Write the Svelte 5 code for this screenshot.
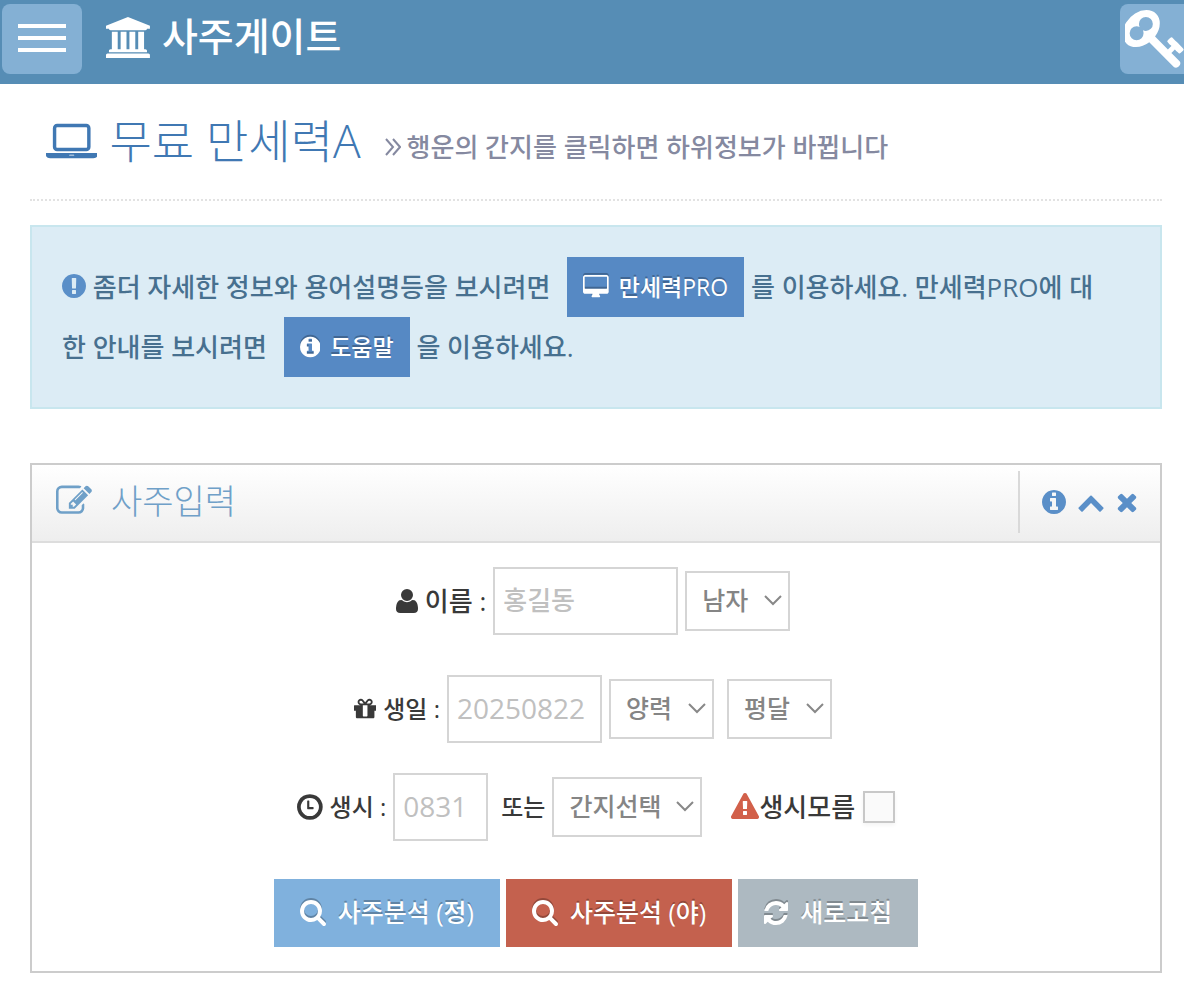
<script lang="ts">
	type Icon = { box: string; d: string };

	const icons: Record<string, Icon> = {
		bank: {
			box: '0 0 1920 1792',
			d: 'M960 0l960 384v128h-128q0 26-20.5 45t-48.5 19h-1526q-28 0-48.5-19t-20.5-45h-128v-128zm-704 640h256v768h128v-768h256v768h128v-768h256v768h128v-768h256v768h59q28 0 48.5 19t20.5 45v64h-1664v-64q0-26 20.5-45t48.5-19h59v-768zm1595 960q28 0 48.5 19t20.5 45v128h-1920v-128q0-26 20.5-45t48.5-19h1782z'
		},
		key: {
			box: '64 128 1664 1600',
			d: 'M832 512q0-80-56-136t-136-56-136 56-56 136q0 42 19 83-41-19-83-19-80 0-136 56t-56 136 56 136 136 56 136-56 56-136q0-42-19-83 41 19 83 19 80 0 136-56t56-136zm851 704q0 17-49 66t-66 49q-9 0-28.5-16t-36.5-33-38.5-40-24.5-26l-96 96 220 220q28 28 28 68 0 42-39 81t-81 39q-40 0-68-28l-671-671q-176 131-365 131-163 0-265.5-102.5t-102.5-265.5q0-160 95-313t248-248 313-95q163 0 265.5 102.5t102.5 265.5q0 189-131 365l355 355 96-96q-3-3-26-24.5t-40-38.5-33-36.5-16-28.5q0-17 49-66t66-49q13 0 23 10 6 6 46 44.5t82 79.5 86.5 86 73 78 28.5 41z'
		},
		laptop: {
			box: '0 0 1920 1792',
			d: 'M416 1280q-66 0-113-47t-47-113v-704q0-66 47-113t113-47h1088q66 0 113 47t47 113v704q0 66-47 113t-113 47h-1088zm-32-864v704q0 13 9.5 22.5t22.5 9.5h1088q13 0 22.5-9.5t9.5-22.5v-704q0-13-9.5-22.5t-22.5-9.5h-1088q-13 0-22.5 9.5t-9.5 22.5zm1376 928h160v96q0 40-47 68t-113 28h-1600q-66 0-113-28t-47-68v-96h1760zm-720 96q16 0 16-16t-16-16h-160q-16 0-16 16t16 16h160z'
		},
		desktop: {
			box: '-64 0 1920 1792',
			d: 'M1728 992v-832q0-13-9.5-22.5t-22.5-9.5h-1600q-13 0-22.5 9.5t-9.5 22.5v832q0 13 9.5 22.5t22.5 9.5h1600q13 0 22.5-9.5t9.5-22.5zm128-832v1088q0 66-47 113t-113 47h-544q0 37 16 77.5t32 71 16 43.5q0 26-19 45t-45 19h-512q-26 0-45-19t-19-45q0-14 16-44t32-70 16-78h-544q-66 0-113-47t-47-113v-1088q0-66 47-113t113-47h1600q66 0 113 47t47 113z'
		},
		exclaim: {
			box: '128 0 1536 1792',
			d: 'M896 128q209 0 385.5 103t279.5 279.5 103 385.5-103 385.5-279.5 279.5-385.5 103-385.5-103-279.5-279.5-103-385.5 103-385.5 279.5-279.5 385.5-103zm128 1247v-190q0-14-9-23.5t-22-9.5h-192q-13 0-23 10t-10 23v190q0 13 10 23t23 10h192q13 0 22-9.5t9-23.5zm-2-344l18-621q0-12-10-18-10-8-24-8h-220q-14 0-24 8-10 6-10 18l17 621q0 10 10 17.5t24 7.5h185q14 0 23.5-7.5t10.5-17.5z'
		},
		info: {
			box: '128 0 1536 1792',
			d: 'M1152 1376v-160q0-14-9-23t-23-9h-96v-512q0-14-9-23t-23-9h-320q-14 0-23 9t-9 23v160q0 14 9 23t23 9h96v320h-96q-14 0-23 9t-9 23v160q0 14 9 23t23 9h448q14 0 23-9t9-23zm-128-896v-160q0-14-9-23t-23-9h-192q-14 0-23 9t-9 23v160q0 14 9 23t23 9h192q14 0 23-9t9-23zm640 416q0 209-103 385.5t-279.5 279.5-385.5 103-385.5-103-279.5-279.5-103-385.5 103-385.5 279.5-279.5 385.5-103 385.5 103 279.5 279.5 103 385.5z'
		},
		edit: {
			box: '0 0 1792 1792',
			d: 'M888 1184l116-116-152-152-116 116v56h96v96h56zm440-720q-16-16-33 1l-350 350q-17 17-1 33t33-1l350-350q17-17 1-33zm80 594v190q0 119-84.5 203.5t-203.5 84.5h-832q-119 0-203.5-84.5t-84.5-203.5v-832q0-119 84.5-203.5t203.5-84.5h832q63 0 117 25 15 7 18 23 3 17-9 29l-49 49q-14 14-32 8-23-6-45-6h-832q-66 0-113 47t-47 113v832q0 66 47 113t113 47h832q66 0 113-47t47-113v-126q0-13 9-22l64-64q15-15 35-7t20 29zm-96-738l288 288-672 672h-288v-288zm444 132l-92 92-288-288 92-92q28-28 68-28t68 28l152 152q28 28 28 68t-28 68z'
		},
		up: {
			box: '64 0 1664 1792',
			d: 'M1683 1331l-166 165q-19 19-45 19t-45-19l-531-531-531 531q-19 19-45 19t-45-19l-166-165q-19-19-19-45.5t19-45.5l742-741q19-19 45-19t45 19l742 741q19 19 19 45.5t-19 45.5z'
		},
		times: {
			box: '192 0 1408 1792',
			d: 'M1490 1322q0 40-28 68l-136 136q-28 28-68 28t-68-28l-294-294-294 294q-28 28-68 28t-68-28l-136-136q-28-28-28-68t28-68l294-294-294-294q-28-28-28-68t28-68l136-136q28-28 68-28t68 28l294 294 294-294q28-28 68-28t68 28l136 136q28 28 28 68t-28 68l-294 294 294 294q28 28 28 68z'
		},
		user: {
			box: '192 0 1408 1792',
			d: 'M1600 1405q0 120-73 189.5t-194 69.5h-874q-121 0-194-69.5t-73-189.5q0-53 3.5-103.5t14-109 26.5-108.5 43-97.5 62-81 85.5-53.5 111.5-20q9 0 42 21.5t74.5 48 108 48 133.5 21.5 133.5-21.5 108-48 74.5-48 42-21.5q61 0 111.5 20t85.5 53.5 62 81 43 97.5 26.5 108.5 14 109 3.5 103.5zm-320-893q0 159-112.5 271.5t-271.5 112.5-271.5-112.5-112.5-271.5 112.5-271.5 271.5-112.5 271.5 112.5 112.5 271.5z'
		},
		gift: {
			box: '128 0 1536 1792',
			d: 'M1056 1356v-716h-320v716q0 25 18 38.5t46 13.5h192q28 0 46-13.5t18-38.5zm-456-844h195l-126-161q-26-31-69-31-40 0-68 28t-28 68 28 68 68 28zm688-96q0-40-28-68t-68-28q-43 0-69 31l-125 161h194q40 0 68-28t28-68zm376 256v320q0 14-9 23t-23 9h-96v416q0 40-28 68t-68 28h-1088q-40 0-68-28t-28-68v-416h-96q-14 0-23-9t-9-23v-320q0-14 9-23t23-9h440q-93 0-158.5-65.5t-65.5-158.5 65.5-158.5 158.5-65.5q107 0 168 77l128 165 128-165q61-77 168-77 93 0 158.5 65.5t65.5 158.5-65.5 158.5-158.5 65.5h440q14 0 23 9t9 23z'
		},
		clock: {
			box: '128 0 1536 1792',
			d: 'M736 544v448q0 14 9 23t23 9h320q14 0 23-9t9-23v-64q0-14-9-23t-23-9h-224v-352q0-14-9-23t-23-9h-64q-14 0-23 9t-9 23zm704 352q0-148-73-273t-198-198-273-73-273 73-198 198-73 273 73 273 198 198 273 73 273-73 198-198 73-273zm224 0q0 209-103 385.5t-279.5 279.5-385.5 103-385.5-103-279.5-279.5-103-385.5 103-385.5 279.5-279.5 385.5-103 385.5 103 279.5 279.5 103 385.5z'
		},
		warning: {
			box: '0 0 1792 1792',
			d: 'M1024 1375v-190q0-14-9.5-23.5t-22.5-9.5h-192q-13 0-22.5 9.5t-9.5 23.5v190q0 14 9.5 23.5t22.5 9.5h192q13 0 22.5-9.5t9.5-23.5zm-2-374l18-459q0-12-10-19-13-11-24-11h-220q-11 0-24 11-10 7-10 21l17 457q0 10 10 16.5t24 6.5h185q14 0 23.5-6.5t10.5-16.5zm-14-934l768 1408q35 63-2 126-17 29-46.5 46t-63.5 17h-1536q-34 0-63.5-17t-46.5-46q-37-63-2-126l768-1408q17-31 47-49t65-18 65 18 47 49z'
		},
		search: {
			box: '64 128 1664 1664',
			d: 'M1216 832q0-185-131.5-316.5t-316.5-131.5-316.5 131.5-131.5 316.5 131.5 316.5 316.5 131.5 316.5-131.5 131.5-316.5zm512 832q0 52-38 90t-90 38q-54 0-90-38l-343-342q-179 124-399 124-143 0-273.5-55.5t-225-150-150-225-55.5-273.5 55.5-273.5 150-225 225-150 273.5-55.5 273.5 55.5 225 150 150 225 55.5 273.5q0 220-124 399l343 343q37 37 37 90z'
		},
		refresh: {
			box: '128 64 1536 1664',
			d: 'M1639 1056q0 5-1 7-64 268-268 434.5t-478 166.5q-146 0-282.5-55t-243.5-157l-129 129q-19 19-45 19t-45-19-19-45v-448q0-26 19-45t45-19h448q26 0 45 19t19 45-19 45l-137 137q71 66 161 102t187 36q134 0 250-65t186-179q11-17 53-117 8-23 30-23h192q13 0 22.5 9.5t9.5 22.5zm25-800v448q0 26-19 45t-45 19h-448q-26 0-45-19t-19-45 19-45l138-138q-148-137-349-137-134 0-250 65t-186 179q-11 17-53 117-8 23-30 23h-199q-13 0-22.5-9.5t-9.5-22.5v-7q65-268 270-434.5t480-166.5q146 0 284 55.5t245 156.5l130-129q19-19 45-19t45 19 19 45z'
		}
	};

	let name = $state('');
	let birthday = $state('');
	let birthtime = $state('');
	let gender = $state('남자');
	let calendar = $state('양력');
	let month = $state('평달');
	let ganji = $state('간지선택');
	let unknownTime = $state(false);
	let open = $state(true);

	function reset() {
		name = '';
		birthday = '';
		birthtime = '';
		gender = '남자';
		calendar = '양력';
		month = '평달';
		ganji = '간지선택';
		unknownTime = false;
	}
</script>

{#snippet icon(key: string)}
	<svg class="icon" viewBox={icons[key].box} aria-hidden="true">
		<path d={icons[key].d} />
	</svg>
{/snippet}

{#snippet caret()}
	<svg class="caret" viewBox="0 0 20 12" aria-hidden="true">
		<path d="M2 1l8 8 8-8" />
	</svg>
{/snippet}

<header class="navbar">
	<button class="menu-toggle" aria-label="메뉴">
		<span></span>
		<span></span>
		<span></span>
	</button>
	<a class="brand" href="/">{@render icon('bank')}<span>사주게이트</span></a>
	<button class="login" aria-label="로그인">{@render icon('key')}</button>
</header>

<main>
	<div class="page-header">
		<h1>{@render icon('laptop')}<span>무료 만세력A</span></h1>
		<p>
			<svg class="double" viewBox="0 0 16 18" aria-hidden="true">
				<path d="M1 1l7 8-7 8M8 1l7 8-7 8" />
			</svg>
			행운의 간지를 클릭하면 하위정보가 바뀝니다
		</p>
	</div>

	<div class="alert">
		{@render icon('exclaim')} 좀더 자세한 정보와 용어설명등을 보시려면
		<a class="btn-link" href="#pro">{@render icon('desktop')}<span>만세력PRO</span></a>
		를 이용하세요. 만세력PRO에 대한 안내를 보시려면
		<a class="btn-link" href="#help">{@render icon('info')}<span>도움말</span></a>
		을 이용하세요.
	</div>

	<section class="widget">
		<div class="widget-header">
			<h2>{@render icon('edit')}<span>사주입력</span></h2>
			<div class="toolbar">
				<button aria-label="정보">{@render icon('info')}</button>
				<button aria-label="접기" onclick={() => (open = !open)}>{@render icon('up')}</button>
				<button aria-label="닫기">{@render icon('times')}</button>
			</div>
		</div>

		{#if open}
			<form class="widget-body" onsubmit={(e) => e.preventDefault()}>
				<div class="row row-name">
					<label for="name">{@render icon('user')}이름 :</label>
					<input id="name" class="name" type="text" placeholder="홍길동" bind:value={name} />
					<div class="select">
						<select aria-label="성별" bind:value={gender}>
							<option>남자</option>
							<option>여자</option>
						</select>
						{@render caret()}
					</div>
				</div>

				<div class="row row-day">
					<label for="birthday">{@render icon('gift')}생일 :</label>
					<input id="birthday" class="day" type="text" placeholder="20250822" bind:value={birthday} />
					<div class="select">
						<select aria-label="양력 음력" bind:value={calendar}>
							<option>양력</option>
							<option>음력</option>
						</select>
						{@render caret()}
					</div>
					<div class="select">
						<select aria-label="평달 윤달" bind:value={month}>
							<option>평달</option>
							<option>윤달</option>
						</select>
						{@render caret()}
					</div>
				</div>

				<div class="row row-time">
					<label for="birthtime">{@render icon('clock')}생시 :</label>
					<input id="birthtime" class="time" type="text" placeholder="0831" bind:value={birthtime} />
					<label class="or" for="ganji">또는</label>
					<div class="select wide">
						<select id="ganji" bind:value={ganji}>
							<option>간지선택</option>
						</select>
						{@render caret()}
					</div>
					<label class="unknown">
						{@render icon('warning')}<span>생시모름</span>
						<input type="checkbox" bind:checked={unknownTime} />
					</label>
				</div>

				<div class="actions">
					<button class="btn light" type="submit">
						{@render icon('search')}<span>사주분석 (정)</span>
					</button>
					<button class="btn danger" type="submit">
						{@render icon('search')}<span>사주분석 (야)</span>
					</button>
					<button class="btn grey" type="button" onclick={reset}>
						{@render icon('refresh')}<span>새로고침</span>
					</button>
				</div>
			</form>
		{/if}
	</section>
</main>

<style>
	:global(body) {
		background: #fff;
		color: #393939;
		font-family: 'Open Sans', 'Noto Sans CJK KR', sans-serif;
		font-size: 26px;
		font-weight: 500;
	}

	button,
	input,
	select {
		box-sizing: border-box;
		font-family: inherit;
		font-weight: inherit;
	}

	button {
		border: 0;
		padding: 0;
		cursor: pointer;
	}

	.icon {
		height: 28px;
		flex: none;
		fill: currentColor;
	}

	/* Navbar */
	.navbar {
		display: flex;
		align-items: flex-start;
		height: 80px;
		padding: 4px 0 0 2px;
		background: #568db5;
	}

	.menu-toggle {
		display: flex;
		flex-direction: column;
		align-items: center;
		justify-content: center;
		gap: 8px;
		width: 80px;
		height: 68px;
		padding-bottom: 2px;
		border-radius: 8px;
		background: #84b0d4;
	}

	.menu-toggle,
	.login {
		height: 70px;
	}

	.menu-toggle span {
		width: 48px;
		height: 4px;
		background: #fff;
	}

	.brand {
		display: flex;
		align-items: center;
		gap: 12px;
		margin-left: 24px;
		color: #fff;
		font-size: 39px;
		line-height: 66px;
		text-decoration: none;
	}

	.brand span {
		padding-bottom: 2px;
		line-height: 64px;
	}

	.brand .icon {
		height: 41px;
	}

	.login {
		width: 64px;
		margin-left: auto;
		padding-left: 5px;
		overflow: hidden;
		border-radius: 8px 0 0 8px;
		background: #84b0d4;
		color: #fff;
		text-align: left;
	}

	.login .icon {
		display: block;
		height: 58px;
	}

	main {
		padding: 0 22px 24px 30px;
	}

	/* Page header */
	.page-header {
		display: flex;
		align-items: center;
		gap: 24px;
		padding: 0 16px;
		height: 115px;
		border-bottom: 2px dotted #e2e2e2;
	}

	h1 {
		display: flex;
		align-items: center;
		gap: 12px;
		margin: 0 0 2px;
		color: #4078b3;
		font-size: 46px;
		font-weight: 300;
		line-height: 108px;
	}

	h1 span {
		padding-bottom: 2px;
	}

	h1 .icon {
		height: 48px;
	}

	.page-header p {
		display: flex;
		align-items: center;
		gap: 6px;
		margin: 10px 0 0;
		color: #8589a0;
		line-height: 40px;
	}

	.double {
		width: 16px;
		height: 18px;
		fill: none;
		stroke: currentColor;
		stroke-width: 2;
	}

	/* Alert */
	.alert {
		margin: 24px 0 54px;
		padding: 30px 60px 30px 30px;
		border: 2px solid #c8e6ee;
		background: #dcecf5;
		color: #47708f;
		line-height: 60px;
	}

	.alert > .icon {
		color: #5a8fc8;
		vertical-align: -3px;
	}

	.btn-link {
		display: inline-flex;
		align-items: center;
		gap: 10px;
		height: 60px;
		margin-left: 10px;
		padding: 0 16px;
		background: #5689c4;
		color: #fff;
		font-size: 23px;
		text-decoration: none;
		text-shadow: 0 -2px 0 rgba(0, 0, 0, 0.25);
		vertical-align: top;
	}

	.btn-link .icon {
		height: 24px;
		filter: drop-shadow(0 -2px 0 rgba(0, 0, 0, 0.25));
	}

	/* Widget */
	.widget {
		border: 2px solid #ccc;
	}

	.widget-header {
		display: flex;
		align-items: center;
		justify-content: space-between;
		height: 76px;
		padding-left: 24px;
		border-bottom: 2px solid #ddd;
		background: linear-gradient(to bottom, #fff, #eee);
	}

	h2 {
		display: flex;
		align-items: center;
		gap: 19px;
		margin: 0 0 4px;
		color: #6fa0c8;
		font-size: 34px;
		font-weight: 300;
		line-height: 68px;
	}

	h2 .icon {
		height: 36px;
	}

	.toolbar {
		display: flex;
		align-items: center;
		gap: 12px;
		height: 62px;
		margin-bottom: 2px;
		padding: 0 22px;
		border-left: 2px solid #d9d9d9;
	}

	.toolbar button {
		background: none;
		color: #5a8fc8;
	}

	.toolbar .icon {
		display: block;
	}

	/* Form */
	.widget-body {
		padding: 24px 0;
	}

	.row {
		display: flex;
		align-items: center;
		justify-content: center;
		gap: 7px;
	}

	.row-name {
		margin-bottom: 40px;
	}

	.row-day {
		margin-bottom: 30px;
		font-size: 24px;
	}

	.row-time {
		margin-bottom: 38px;
		font-size: 24px;
	}

	label {
		display: flex;
		align-items: center;
		gap: 7px;
		line-height: 40px;
	}

	.row-day label .icon {
		height: 26px;
	}

	.row-time label .icon {
		height: 30px;
	}

	input[type='text'] {
		height: 68px;
		padding: 0 8px 2px;
		border: 2px solid #d5d5d5;
		background: #fff;
		color: #858585;
		font-size: 28px;
		font-weight: 400;
	}

	input::placeholder {
		color: #c0c0c0;
		opacity: 1;
	}

	input[type='text'].name {
		width: 185px;
		font-size: 26px;
		font-weight: 500;
	}

	input.day {
		width: 155px;
	}

	input.time {
		width: 95px;
	}

	.select {
		display: grid;
		align-items: center;
		width: 105px;
		margin-right: 6px;
	}

	.select.wide {
		width: 150px;
	}

	.select > :global(*) {
		grid-area: 1 / 1;
	}

	select {
		appearance: none;
		width: 100%;
		height: 60px;
		padding: 0 15px 2px;
		border: 2px solid #d5d5d5;
		border-radius: 0;
		background: #fff;
		color: #858585;
		font-size: 25px;
	}

	.caret {
		justify-self: end;
		width: 20px;
		height: 12px;
		margin-right: 7px;
		fill: none;
		stroke: #888;
		stroke-width: 2;
		pointer-events: none;
	}

	.or {
		margin-left: 6px;
	}

	.unknown {
		gap: 8px;
		margin-left: 16px;
		font-size: 26px;
	}

	.row-time .unknown .icon {
		height: 28px;
		margin-right: -8px;
		color: #d2604a;
	}

	input[type='checkbox'] {
		appearance: none;
		width: 32px;
		height: 32px;
		margin: 0;
		border: 2px solid #c8c8c8;
		background: #fafafa;
		box-shadow: 0 2px 4px rgba(0, 0, 0, 0.05);
	}

	input[type='checkbox']:checked {
		background: #84b0d4;
	}

	/* Buttons */
	.actions {
		display: flex;
		justify-content: center;
		gap: 6px;
	}

	.btn {
		display: flex;
		align-items: center;
		gap: 12px;
		height: 68px;
		padding: 0 26px;
		color: #fff;
		font-size: 25px;
		text-shadow: 0 -2px 0 rgba(0, 0, 0, 0.25);
	}

	.btn span {
		padding-bottom: 4px;
	}

	.btn .icon {
		height: 26px;
		filter: drop-shadow(0 -2px 0 rgba(0, 0, 0, 0.25));
	}

	.btn.light {
		background: #80b1dd;
	}

	.btn.danger {
		background: #c4614e;
	}

	.btn.grey {
		background: #adb9c1;
	}
</style>
